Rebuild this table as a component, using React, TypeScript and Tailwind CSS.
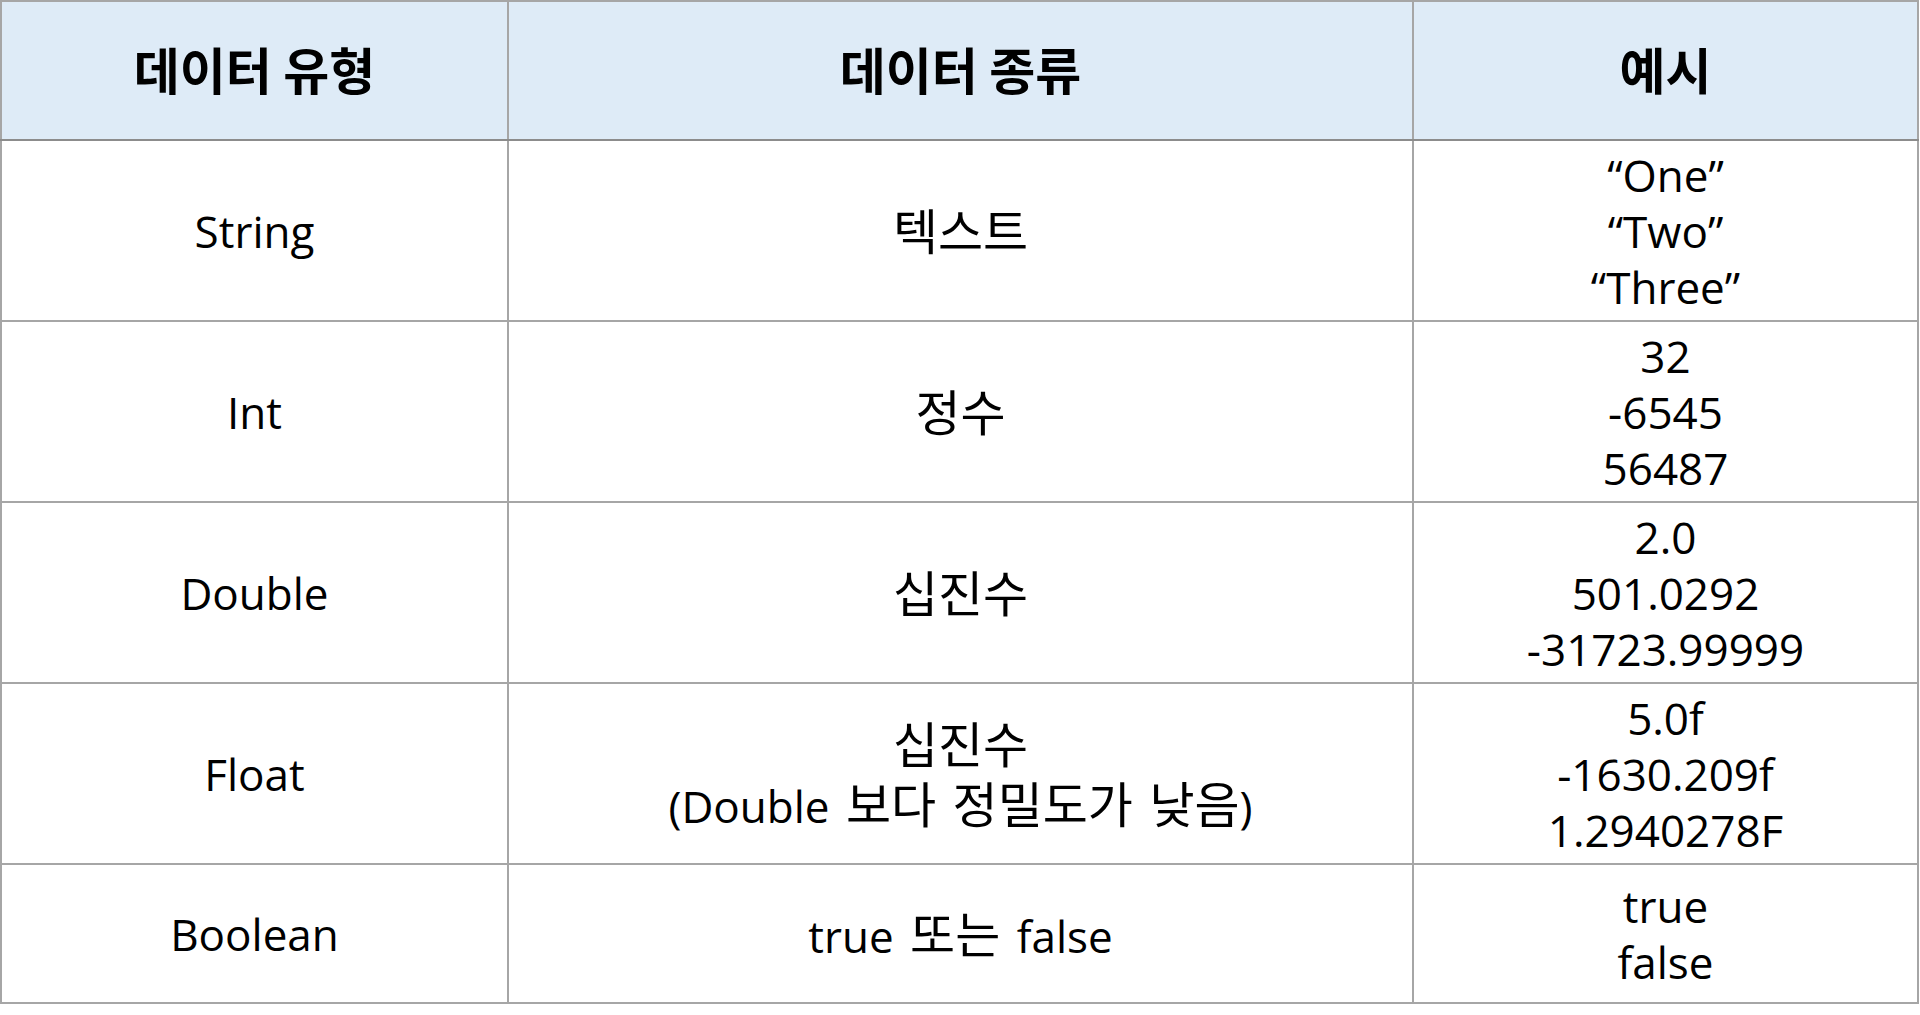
const rows = [
  { type: "String", kind: ["텍스트"], examples: ["“One”", "“Two”", "“Three”"] },
  { type: "Int", kind: ["정수"], examples: ["32", "-6545", "56487"] },
  { type: "Double", kind: ["십진수"], examples: ["2.0", "501.0292", "-31723.99999"] },
  {
    type: "Float",
    kind: ["십진수", "(Double 보다 정밀도가 낮음)"],
    examples: ["5.0f", "-1630.209f", "1.2940278F"],
  },
  { type: "Boolean", kind: ["true 또는 false"], examples: ["true", "false"] },
];

// Hangul runs render a bit larger than the Latin around them, like Malgun Gothic
function Mixed({ text }: { text: string }) {
  const parts = text.split(/([가-힣]+)/);
  return (
    <>
      {parts.map((p, i) =>
        /[가-힣]/.test(p) ? (
          <span key={i} className="font-['Noto_Sans_CJK_KR',sans-serif] text-[49px] leading-[56px]">
            {p}
          </span>
        ) : (
          <span key={i}>{p}</span>
        )
      )}
    </>
  );
}

export default function App() {
  return (
    <div className="h-[1015px] w-[1920px] bg-white font-['Open_Sans','Noto_Sans_CJK_KR',sans-serif] text-black">
      <table className="w-[1919px] table-fixed border-collapse text-center text-[44px] leading-[56px]">
        <colgroup>
          <col className="w-[507px]" />
          <col className="w-[905px]" />
          <col />
        </colgroup>
        <thead>
          <tr className="h-[139px] bg-[#deebf7]">
            {["데이터 유형", "데이터 종류", "예시"].map((h) => (
              <th
                key={h}
                className="border-2 border-[#a6a6a6] border-b-[#8c8c8c] pb-[6px] font-['Noto_Sans_CJK_KR',sans-serif] text-[50px] font-bold"
              >
                {h}
              </th>
            ))}
          </tr>
        </thead>
        <tbody>
          {rows.map((r, i) => (
            <tr key={r.type} className={i === rows.length - 1 ? "h-[139px]" : "h-[181px]"}>
              <td className="border-2 border-[#a6a6a6]">{r.type}</td>
              <td className="border-2 border-[#a6a6a6] [word-spacing:5px]">
                {r.kind.map((k) => (
                  <div key={k}>
                    <Mixed text={k} />
                  </div>
                ))}
              </td>
              <td className="border-2 border-[#a6a6a6]">
                {r.examples.map((e) => (
                  <div key={e}>{e}</div>
                ))}
              </td>
            </tr>
          ))}
        </tbody>
      </table>
    </div>
  );
}
